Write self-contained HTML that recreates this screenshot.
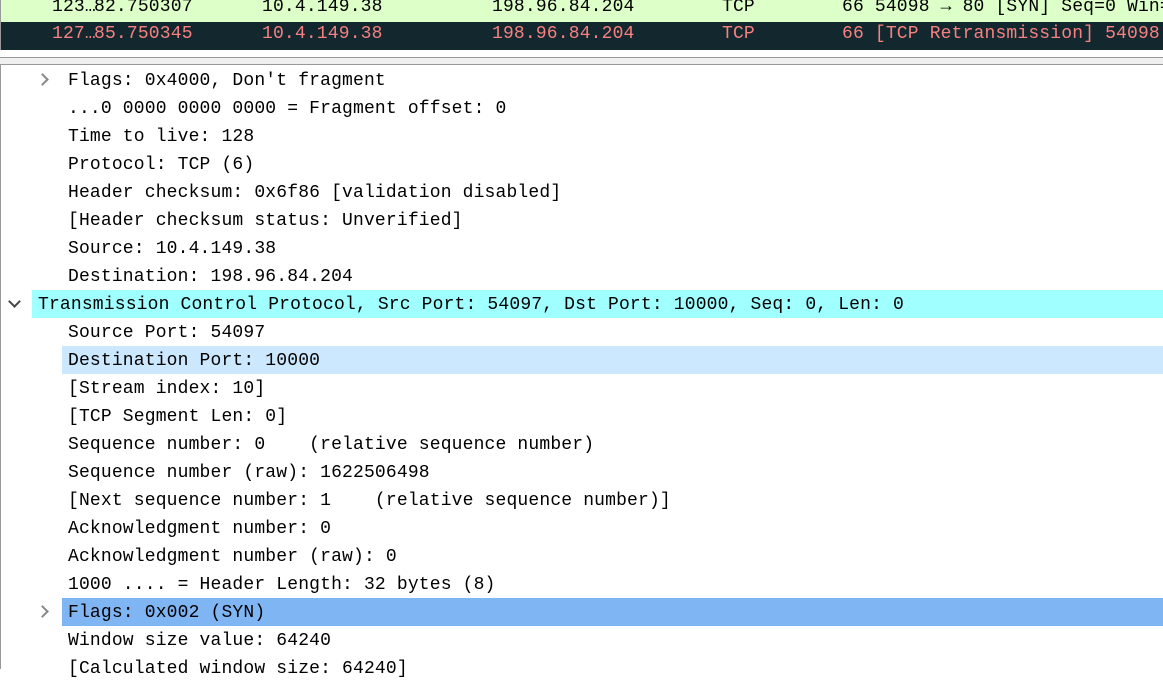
<html><head><style>
body{margin:0;width:1163px;height:669px;overflow:hidden;background:#fff;font-family:"Liberation Mono",monospace;font-size:18px;letter-spacing:0.16px;position:relative}
.r{position:absolute;height:28px;line-height:30px;white-space:pre;color:#000}
.c{position:absolute;white-space:pre}
.arr{position:absolute;width:7px;height:7px;border-right:2px solid #888;border-bottom:2px solid #888}
</style></head><body>
<div style="position:absolute;left:0;top:0;width:1163px;height:22px;background:#ddffc8;line-height:14px">
<span class="c" style="left:52px;top:0px">123…</span><span class="c" style="left:94px;top:0px">82.750307</span><span class="c" style="left:262px;top:0px">10.4.149.38</span><span class="c" style="left:492px;top:0px">198.96.84.204</span><span class="c" style="left:722px;top:0px">TCP</span><span class="c" style="left:842px;top:0px">66 54098 → 80 [SYN] Seq=0 Win=</span></div>
<div style="position:absolute;left:0;top:22px;width:1163px;height:28px;background:#12272e;color:#f78080;line-height:22px;overflow:hidden">
<span class="c" style="left:52px;top:1px">127…</span><span class="c" style="left:94px;top:1px">85.750345</span><span class="c" style="left:262px;top:1px">10.4.149.38</span><span class="c" style="left:492px;top:1px">198.96.84.204</span><span class="c" style="left:722px;top:1px">TCP</span><span class="c" style="left:842px;top:1px">66 [TCP Retransmission] 54098</span></div>
<div style="position:absolute;left:0;top:0;width:1px;height:50px;background:#999"></div>
<div style="position:absolute;left:0;top:57px;width:1163px;height:1px;background:#999"></div>
<div style="position:absolute;left:0;top:58px;width:1163px;height:6px;background:#f0f0f0"></div>
<div style="position:absolute;left:0;top:64px;width:1163px;height:1px;background:#999"></div>
<div style="position:absolute;left:0;top:64px;width:1px;height:605px;background:#999"></div>
<div style="position:absolute;left:32px;top:290px;width:1131px;height:28px;background:#a0ffff"></div>
<div style="position:absolute;left:62px;top:346px;width:1101px;height:28px;background:#cce8ff"></div>
<div style="position:absolute;left:62px;top:598px;width:1101px;height:28px;background:#80b5f4"></div>
<div class="arr" style="left:38px;top:75px;transform:rotate(-45deg)"></div>
<div class="arr" style="left:10px;top:297px;transform:rotate(45deg);border-color:#444"></div>
<div class="arr" style="left:38px;top:607px;transform:rotate(-45deg)"></div>
<div class="r" style="left:68px;top:66px">Flags: 0x4000, Don't fragment</div>
<div class="r" style="left:68px;top:94px">...0 0000 0000 0000 = Fragment offset: 0</div>
<div class="r" style="left:68px;top:122px">Time to live: 128</div>
<div class="r" style="left:68px;top:150px">Protocol: TCP (6)</div>
<div class="r" style="left:68px;top:178px">Header checksum: 0x6f86 [validation disabled]</div>
<div class="r" style="left:68px;top:206px">[Header checksum status: Unverified]</div>
<div class="r" style="left:68px;top:234px">Source: 10.4.149.38</div>
<div class="r" style="left:68px;top:262px">Destination: 198.96.84.204</div>
<div class="r" style="left:38px;top:290px">Transmission Control Protocol, Src Port: 54097, Dst Port: 10000, Seq: 0, Len: 0</div>
<div class="r" style="left:68px;top:318px">Source Port: 54097</div>
<div class="r" style="left:68px;top:346px">Destination Port: 10000</div>
<div class="r" style="left:68px;top:374px">[Stream index: 10]</div>
<div class="r" style="left:68px;top:402px">[TCP Segment Len: 0]</div>
<div class="r" style="left:68px;top:430px">Sequence number: 0    (relative sequence number)</div>
<div class="r" style="left:68px;top:458px">Sequence number (raw): 1622506498</div>
<div class="r" style="left:68px;top:486px">[Next sequence number: 1    (relative sequence number)]</div>
<div class="r" style="left:68px;top:514px">Acknowledgment number: 0</div>
<div class="r" style="left:68px;top:542px">Acknowledgment number (raw): 0</div>
<div class="r" style="left:68px;top:570px">1000 .... = Header Length: 32 bytes (8)</div>
<div class="r" style="left:68px;top:598px">Flags: 0x002 (SYN)</div>
<div class="r" style="left:68px;top:626px">Window size value: 64240</div>
<div class="r" style="left:68px;top:654px">[Calculated window size: 64240]</div>
</body></html>
